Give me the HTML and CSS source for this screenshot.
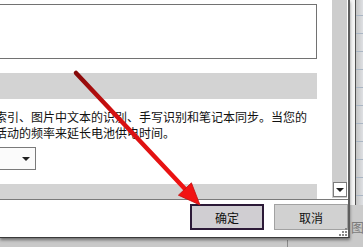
FILE: index.html
```html
<!DOCTYPE html>
<html lang="zh-CN">
<head>
<meta charset="utf-8">
<title>Word 选项</title>
<link rel="stylesheet" href="styles.css">
</head>
<body>
<div class="screen">
  <div class="dialog">
    <div class="dlg-body">
      <div class="content">
        <div class="top-box"></div>
        <div class="band band-1"></div>
        <p class="desc">索引、图片中文本的识别、手写识别和笔记本同步。当您的<br>活动的频率来延长电池供电时间。</p>
        <div class="select"><span class="caret"></span></div>
        <div class="band band-2"></div>
      </div>
      <div class="scrollbar">
        <div class="track"></div>
        <div class="arrow-btn"><span class="caret"></span></div>
      </div>
    </div>
    <div class="footer">
      <button class="btn btn-primary">确定</button>
      <button class="btn">取消</button>
    </div>
    <div class="grip">
      <svg width="9" height="9" viewBox="0 0 9 9"><g fill="#8a8a8a"><rect x="6" y="0" width="2" height="2"/><rect x="3" y="3" width="2" height="2"/><rect x="6" y="3" width="2" height="2"/><rect x="0" y="6" width="2" height="2"/><rect x="3" y="6" width="2" height="2"/><rect x="6" y="6" width="2" height="2"/></g></svg>
    </div>
  </div>
  <div class="sheet">
    <div class="sheet-grid">
      <div class="strip"></div>
      <div class="rows"></div>
    </div>
    <div class="sheet-low"><span class="ghost">图</span></div>
  </div>
</div>
<div class="below"><div class="below-line"></div></div>
<svg class="annot" width="363" height="247" viewBox="0 0 363 247">
  <defs>
    <linearGradient id="rg" x1="76" y1="73" x2="200" y2="205" gradientUnits="userSpaceOnUse">
      <stop offset="0" stop-color="#850a0a"/>
      <stop offset="0.3" stop-color="#d41010"/>
      <stop offset="1" stop-color="#f51414"/>
    </linearGradient>
  </defs>
  <line x1="76" y1="73" x2="186" y2="190" stroke="url(#rg)" stroke-width="4.5" stroke-linecap="round"/>
  <polygon points="200,205 178.4,195.2 191.4,182.8" fill="#f21313" stroke="#c40c0c" stroke-width="0.8" stroke-linejoin="round"/>
</svg>
</body>
</html>
```

FILE: styles.css
```css
html, body {
  margin: 0;
  padding: 0;
}
body {
  width: 363px;
  height: 247px;
  overflow: hidden;
  position: relative;
  background: #c9c9c9;
  font-family: "Noto Sans CJK SC", "Microsoft YaHei", sans-serif;
  font-size: 12px;
  color: #111;
}
.screen {
  display: flex;
  height: 240px;
}
.dialog {
  position: relative;
  width: 348px;
  height: 237px;
  background: #fff;
  border-right: 2px solid #5e5e5e;
  border-bottom: 1px solid #3a3a3a;
  box-shadow: 0 2px 3px rgba(0, 0, 0, 0.45);
  display: flex;
  flex-direction: column;
  flex: none;
}
.dlg-body {
  display: flex;
  height: 199px;
  border-bottom: 1px solid #7a7a7a;
}
.content {
  width: 317px;
  margin-right: 15px;
  padding-top: 4px;
  display: flex;
  flex-direction: column;
}
.top-box {
  height: 53px;
  margin-left: -10px;
  border: 1px solid #727272;
  background: #fff;
}
.band {
  background: #d3d3d3;
  margin-left: -10px;
}
.band-1 {
  margin-top: 14px;
  height: 26px;
}
.band-2 {
  margin-top: 14px;
  height: 15px;
}
.desc {
  margin: 10px 0 0 -5px;
  line-height: 16px;
  white-space: nowrap;
}
.select {
  margin: 6px 0 0 -10px;
  width: 39px;
  height: 21px;
  border: 1px solid #7a7a7a;
  background: #fbfbfb;
  display: flex;
  align-items: center;
  justify-content: flex-end;
  padding-right: 5px;
}
.caret {
  width: 0;
  height: 0;
  border-left: 4px solid transparent;
  border-right: 4px solid transparent;
  border-top: 4px solid #202020;
}
.scrollbar {
  width: 15px;
  height: 198px;
  display: flex;
  flex-direction: column;
  background: #cdcdcd;
}
.track {
  flex: 1;
}
.arrow-btn {
  height: 13px;
  margin: 0 0 1px 1px;
  border: 1px solid #7c7c7c;
  background: #fff;
  display: flex;
  align-items: center;
  justify-content: center;
}
.footer {
  flex: 1;
  display: flex;
  justify-content: flex-end;
  align-items: flex-start;
  gap: 10px;
  padding-top: 4px;
}
.btn {
  box-sizing: border-box;
  width: 74px;
  height: 26px;
  margin: 0;
  padding: 0;
  font-family: inherit;
  font-size: 12px;
  color: #111;
  background: #d1d1d1;
  border: 1px solid #a2a2a2;
}
.btn-primary {
  border: 2px solid #2c1a38;
  background: #d0ced2;
}
.grip {
  position: absolute;
  right: 0;
  bottom: 0;
  width: 9px;
  height: 9px;
}
.grip svg {
  display: block;
}
.sheet {
  flex: 1;
  display: flex;
  flex-direction: column;
}
.sheet-grid {
  height: 205px;
  display: flex;
}
.strip {
  width: 5px;
  background: #f4f4f4;
  border-right: 1px solid #505050;
}
.rows {
  flex: 1;
  background:
    repeating-linear-gradient(to bottom, transparent 0, transparent 15px, #aab6c4 15px, #aab6c4 16px, transparent 16px, transparent 18px),
    linear-gradient(to right, #c4c4c4, #e2e4e8);
}
.sheet-low {
  flex: 1;
  background: #cbcbcb;
  overflow: hidden;
}
.ghost {
  display: block;
  margin: 15px 0 0 1px;
  font-size: 13px;
  line-height: 14px;
  color: #7c7c7c;
}
.below {
  height: 7px;
}
.below-line {
  margin-left: 287px;
  width: 1px;
  height: 7px;
  background: #8a8a8a;
}
.annot {
  position: absolute;
  left: 0;
  top: 0;
  pointer-events: none;
}
```
